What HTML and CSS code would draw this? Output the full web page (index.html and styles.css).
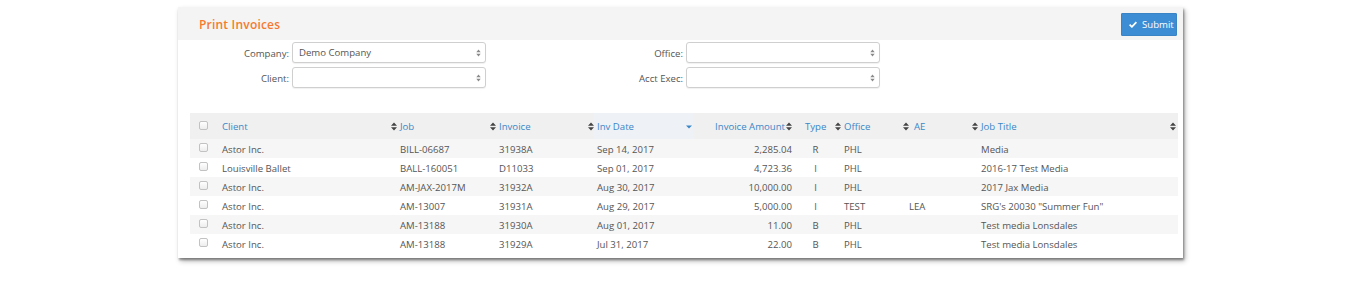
FILE: index.html
```html
<!DOCTYPE html>
<html>
<head>
<meta charset="utf-8">
<link rel="stylesheet" href="styles.css">
</head>
<body>
<div class="panel">
  <div class="panel-head">
    <div class="title">Print Invoices</div>
    <button class="btn-submit"><svg class="check" width="8" height="7" viewBox="0 0 8 7"><path d="M0.6 3.6 L2.9 5.8 L7.4 1.1" fill="none" stroke="#fff" stroke-width="1.8"/></svg>Submit</button>
  </div>
  <div class="form">
    <label class="lbl">Company:</label>
    <div class="select"><span>Demo Company</span><svg class="updown" width="5" height="8" viewBox="0 0 5 8"><path d="M0.3 3.2 L2.5 0.6 L4.7 3.2Z M0.3 4.8 L4.7 4.8 L2.5 7.4Z" fill="#8a8a8a"/></svg></div>
    <label class="lbl">Office:</label>
    <div class="select"><span></span><svg class="updown" width="5" height="8" viewBox="0 0 5 8"><path d="M0.3 3.2 L2.5 0.6 L4.7 3.2Z M0.3 4.8 L4.7 4.8 L2.5 7.4Z" fill="#8a8a8a"/></svg></div>
    <label class="lbl">Client:</label>
    <div class="select"><span></span><svg class="updown" width="5" height="8" viewBox="0 0 5 8"><path d="M0.3 3.2 L2.5 0.6 L4.7 3.2Z M0.3 4.8 L4.7 4.8 L2.5 7.4Z" fill="#8a8a8a"/></svg></div>
    <label class="lbl">Acct Exec:</label>
    <div class="select"><span></span><svg class="updown" width="5" height="8" viewBox="0 0 5 8"><path d="M0.3 3.2 L2.5 0.6 L4.7 3.2Z M0.3 4.8 L4.7 4.8 L2.5 7.4Z" fill="#8a8a8a"/></svg></div>
  </div>
  <table class="grid">
    <colgroup>
      <col class="c-cb"><col class="c-client"><col class="c-job"><col class="c-inv"><col class="c-date"><col class="c-amt"><col class="c-type"><col class="c-office"><col class="c-ae"><col class="c-title">
    </colgroup>
    <thead>
      <tr>
        <th class="cb"><span class="box"></span></th>
        <th><div class="hc"><span>Client</span><svg class="sort" width="6" height="9" viewBox="0 0 6 9"><path d="M0 3.8 L3 0.4 L6 3.8Z M0 5.2 L6 5.2 L3 8.6Z" fill="#444"/></svg></div></th>
        <th><div class="hc"><span>Job</span><svg class="sort" width="6" height="9" viewBox="0 0 6 9"><path d="M0 3.8 L3 0.4 L6 3.8Z M0 5.2 L6 5.2 L3 8.6Z" fill="#444"/></svg></div></th>
        <th><div class="hc"><span>Invoice</span><svg class="sort" width="6" height="9" viewBox="0 0 6 9"><path d="M0 3.8 L3 0.4 L6 3.8Z M0 5.2 L6 5.2 L3 8.6Z" fill="#444"/></svg></div></th>
        <th class="sorted"><div class="hc"><span>Inv Date</span><svg class="caret" width="6" height="4" viewBox="0 0 6 4"><path d="M0 0.5 L6 0.5 L3 3.5Z" fill="#3a87c8"/></svg></div></th>
        <th><div class="hc right"><span>Invoice Amount</span><svg class="sort" width="6" height="9" viewBox="0 0 6 9"><path d="M0 3.8 L3 0.4 L6 3.8Z M0 5.2 L6 5.2 L3 8.6Z" fill="#444"/></svg></div></th>
        <th><div class="hc center"><span>Type</span><svg class="sort" width="6" height="9" viewBox="0 0 6 9"><path d="M0 3.8 L3 0.4 L6 3.8Z M0 5.2 L6 5.2 L3 8.6Z" fill="#444"/></svg></div></th>
        <th><div class="hc"><span>Office</span><svg class="sort" width="6" height="9" viewBox="0 0 6 9"><path d="M0 3.8 L3 0.4 L6 3.8Z M0 5.2 L6 5.2 L3 8.6Z" fill="#444"/></svg></div></th>
        <th class="ae-h"><div class="hc"><span>AE</span><svg class="sort" width="6" height="9" viewBox="0 0 6 9"><path d="M0 3.8 L3 0.4 L6 3.8Z M0 5.2 L6 5.2 L3 8.6Z" fill="#444"/></svg></div></th>
        <th class="title-h"><div class="hc"><span>Job Title</span><svg class="sort" width="6" height="9" viewBox="0 0 6 9"><path d="M0 3.8 L3 0.4 L6 3.8Z M0 5.2 L6 5.2 L3 8.6Z" fill="#444"/></svg></div></th>
      </tr>
    </thead>
    <tbody>
      <tr><td class="cb"><span class="box"></span></td><td>Astor Inc.</td><td>BILL-06687</td><td>31938A</td><td>Sep 14, 2017</td><td class="num">2,285.04</td><td class="ctr">R</td><td>PHL</td><td class="ae"></td><td class="jt">Media</td></tr>
      <tr><td class="cb"><span class="box"></span></td><td>Louisville Ballet</td><td>BALL-160051</td><td>D11033</td><td>Sep 01, 2017</td><td class="num">4,723.36</td><td class="ctr">I</td><td>PHL</td><td class="ae"></td><td class="jt">2016-17 Test Media</td></tr>
      <tr><td class="cb"><span class="box"></span></td><td>Astor Inc.</td><td>AM-JAX-2017M</td><td>31932A</td><td>Aug 30, 2017</td><td class="num">10,000.00</td><td class="ctr">I</td><td>PHL</td><td class="ae"></td><td class="jt">2017 Jax Media</td></tr>
      <tr><td class="cb"><span class="box"></span></td><td>Astor Inc.</td><td>AM-13007</td><td>31931A</td><td>Aug 29, 2017</td><td class="num">5,000.00</td><td class="ctr">I</td><td>TEST</td><td class="ae">LEA</td><td class="jt">SRG's 20030 "Summer Fun"</td></tr>
      <tr><td class="cb"><span class="box"></span></td><td>Astor Inc.</td><td>AM-13188</td><td>31930A</td><td>Aug 01, 2017</td><td class="num">11.00</td><td class="ctr">B</td><td>PHL</td><td class="ae"></td><td class="jt">Test media Lonsdales</td></tr>
      <tr><td class="cb"><span class="box"></span></td><td>Astor Inc.</td><td>AM-13188</td><td>31929A</td><td>Jul 31, 2017</td><td class="num">22.00</td><td class="ctr">B</td><td>PHL</td><td class="ae"></td><td class="jt">Test media Lonsdales</td></tr>
    </tbody>
  </table>
</div>
</body>
</html>
```

FILE: styles.css
```css
* { box-sizing: border-box; }
html, body { margin: 0; padding: 0; background: #fff; }
body {
  font-family: "Open Sans", "Noto Sans", sans-serif;
  font-size: 9.6px;
  color: #555;
  padding: 7px 0 24px 178px;
  min-height: 282px;
}
.panel {
  width: 1005px;
  background: #fff;
  box-shadow: 1px 2px 2px rgba(0,0,0,0.35), 2px 3px 5px rgba(0,0,0,0.3);
  padding: 0 5px 5px 0;
}
.panel-head {
  height: 33px;
  background: #f4f4f4;
  margin-right: -5px;
  display: flex;
  align-items: center;
  justify-content: space-between;
  padding: 0 6px 0 21px;
}
.title {
  color: #f47a30;
  font-size: 12px;
  font-weight: 600;
  letter-spacing: 0.2px;
  padding-top: 1px;
}
.btn-submit {
  width: 56px;
  height: 23px;
  margin-top: 1px;
  border: 1px solid #3a84c6;
  background: #3d8dd5;
  color: #fff;
  font-family: "Open Sans", "Noto Sans", sans-serif;
  font-size: 9.6px;
  display: flex;
  align-items: center;
  padding: 0 0 0 7px;
  gap: 5px;
  border-radius: 1px;
}
.check { display: block; }
.form {
  display: grid;
  grid-template-columns: 111px 194px 194px 194px;
  column-gap: 3px;
  row-gap: 4px;
  padding-top: 2px;
  margin-bottom: 25px;
}
.lbl {
  text-align: right;
  align-self: center;
  color: #555;
  padding-top: 1px;
}
.select {
  height: 21px;
  border: 1px solid #cfcfcf;
  border-radius: 3px;
  background: #fff;
  box-shadow: 0 1px 1px rgba(0,0,0,0.06);
  display: flex;
  align-items: center;
  justify-content: space-between;
  padding: 0 4px 0 6px;
  color: #555;
}
.updown { display: block; }
.grid {
  margin-left: 12px;
  width: 988px;
  border-collapse: collapse;
  table-layout: fixed;
}
.c-cb { width: 29px; }
.c-client { width: 178px; }
.c-job { width: 99px; }
.c-inv { width: 98px; }
.c-date { width: 99px; }
.c-amt { width: 101px; }
.c-type { width: 47px; }
.c-office { width: 68px; }
.c-ae { width: 69px; }
.c-title { width: 200px; }
th {
  height: 26px;
  background: #f0f0f0;
  font-weight: 400;
  color: #3a87c8;
  text-align: left;
  padding: 1px 0 0 3px;
  white-space: nowrap;
}
th.sorted { background: #eef1f6; }
.hc {
  display: flex;
  align-items: center;
  justify-content: space-between;
}
.hc.right { justify-content: flex-end; padding-right: 2px; gap: 1px; }
.hc.center { padding-left: 8px; }
.sorted .hc { padding-right: 1px; }
.sort, .caret { display: block; flex: none; }
th.ae-h { padding-left: 5px; }
th.title-h { padding-left: 3px; }
th.title-h .hc { padding-right: 2px; }
td {
  height: 19px;
  padding: 2px 0 0 3px;
  white-space: nowrap;
  color: #555;
}
tbody tr:nth-child(odd) td { background: #f6f6f6; }
td.num { text-align: right; padding: 2px 2px 0 0; }
td.ctr { text-align: center; padding: 2px 4px 0 0; }
td.ae { padding-left: 0; }
td.jt { padding-left: 3px; }
th.cb, td.cb { padding: 0 0 0 9px; }
.box {
  display: block;
  width: 9px;
  height: 9px;
  border: 1px solid #c2c2c2;
  border-radius: 2px;
  background: linear-gradient(#fff, #ededed);
  position: relative;
  top: -1px;
}
```
